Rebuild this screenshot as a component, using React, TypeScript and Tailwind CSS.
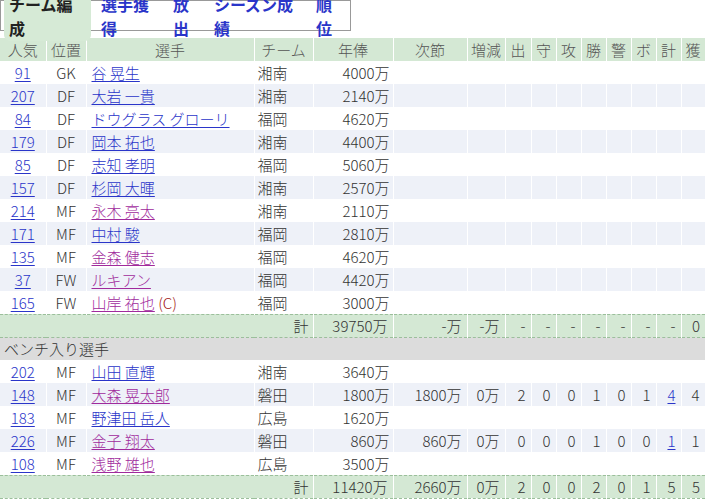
import React from 'react';

const cols = [46, 40, 168, 59, 80, 74, 38, 26, 25, 25, 25, 25, 25, 25, 24];
const heads = ['人気', '位置', '選手', 'チーム', '年俸', '次節', '増減', '出', '守', '攻', '勝', '警', 'ボ', '計', '獲'];

type P = { pop: string; pos: string; name: string; purple?: boolean; cap?: boolean; team: string; pay: string; stats?: string[] };

const starters: P[] = [
  { pop: '91', pos: 'GK', name: '谷 晃生', team: '湘南', pay: '4000万' },
  { pop: '207', pos: 'DF', name: '大岩 一貴', team: '湘南', pay: '2140万' },
  { pop: '84', pos: 'DF', name: 'ドウグラス グローリ', team: '福岡', pay: '4620万' },
  { pop: '179', pos: 'DF', name: '岡本 拓也', team: '湘南', pay: '4400万' },
  { pop: '85', pos: 'DF', name: '志知 孝明', team: '福岡', pay: '5060万' },
  { pop: '157', pos: 'DF', name: '杉岡 大暉', team: '湘南', pay: '2570万' },
  { pop: '214', pos: 'MF', name: '永木 亮太', purple: true, team: '湘南', pay: '2110万' },
  { pop: '171', pos: 'MF', name: '中村 駿', team: '福岡', pay: '2810万' },
  { pop: '135', pos: 'MF', name: '金森 健志', purple: true, team: '福岡', pay: '4620万' },
  { pop: '37', pos: 'FW', name: 'ルキアン', purple: true, team: '福岡', pay: '4420万' },
  { pop: '165', pos: 'FW', name: '山岸 祐也', purple: true, cap: true, team: '福岡', pay: '3000万' },
];

const bench: P[] = [
  { pop: '202', pos: 'MF', name: '山田 直輝', team: '湘南', pay: '3640万' },
  { pop: '148', pos: 'MF', name: '大森 晃太郎', purple: true, team: '磐田', pay: '1800万', stats: ['1800万', '0万', '2', '0', '0', '1', '0', '1', '4', '4'] },
  { pop: '183', pos: 'MF', name: '野津田 岳人', team: '広島', pay: '1620万' },
  { pop: '226', pos: 'MF', name: '金子 翔太', purple: true, team: '磐田', pay: '860万', stats: ['860万', '0万', '0', '0', '0', '1', '0', '0', '1', '1'] },
  { pop: '108', pos: 'MF', name: '浅野 雄也', purple: true, team: '広島', pay: '3500万' },
];

const link = 'text-[#2a35c9] underline underline-offset-2';

function Row({ p, i }: { p: P; i: number }) {
  const bg = i % 2 === 0 ? 'bg-white' : 'bg-[#eef1f8]';
  const s = p.stats ?? Array(10).fill('');
  return (
    <tr className={`${bg} h-[23px]`}>
      <td className="text-center border-r border-white"><span className={link}>{p.pop}</span></td>
      <td className="text-center border-r border-white">{p.pos}</td>
      <td className="pl-[5px] border-r border-white whitespace-nowrap">
        <span className={p.purple ? 'text-[#a02a9c] underline underline-offset-2' : link}>{p.name}</span>
        {p.cap && <span className="text-[#a01010]"> (C)</span>}
      </td>
      <td className="pl-[3px] border-r border-white">{p.team}</td>
      <td className="text-right pr-[3px] border-r border-white">{p.pay}</td>
      {s.map((v, k) => (
        <td key={k} className="text-right pr-[5px] border-r border-white">
          {k === 8 && v ? <span className={link}>{v}</span> : v}
        </td>
      ))}
    </tr>
  );
}

function Total({ vals }: { vals: string[] }) {
  return (
    <tr className="bg-[#d4e8d4] h-[23px] border-y border-dashed border-[#9bbf9b]">
      <td colSpan={4} className="text-right pr-[4px]">計</td>
      {vals.map((v, k) => (
        <td key={k} className="text-right pr-[5px] border-l border-white">{v}</td>
      ))}
    </tr>
  );
}

export default function App() {
  return (
    <div className="w-[705px] h-[501px] bg-white text-[15px] font-light text-[#333] overflow-hidden" style={{ fontFamily: '"Noto Sans CJK JP", "Noto Sans", sans-serif' }}>
      <div className="w-[351px] h-[31px] border border-[#999] flex items-center px-[3px] gap-[10px] text-[16px] font-bold">
        <span className="bg-[#d6ead6] rounded-[6px] px-[5px] py-[1px] text-[#222]">チーム編成</span>
        <span className="text-[#2a35c9]">選手獲得</span>
        <span className="text-[#2a35c9]">放出</span>
        <span className="text-[#2a35c9]">シーズン成績</span>
        <span className="text-[#2a35c9]">順位</span>
      </div>
      <table className="mt-[7px] border-collapse table-fixed w-[705px] leading-none">
        <colgroup>
          {cols.map((w, i) => <col key={i} style={{ width: w }} />)}
        </colgroup>
        <thead>
          <tr className="bg-[#d4e8d4] h-[23px] text-[#555]">
            {heads.map((h, i) => (
              <th key={i} className="font-light text-center border-r border-white">{h}</th>
            ))}
          </tr>
        </thead>
        <tbody>
          {starters.map((p, i) => <Row key={p.pop} p={p} i={i} />)}
          <Total vals={['39750万', '-万', '-万', '-', '-', '-', '-', '-', '-', '-', '0']} />
          <tr className="bg-[#dcdcdc] h-[23px]">
            <td colSpan={15} className="pl-[4px]">ベンチ入り選手</td>
          </tr>
          {bench.map((p, i) => <Row key={p.pop} p={p} i={i} />)}
          <Total vals={['11420万', '2660万', '0万', '2', '0', '0', '2', '0', '1', '5', '5']} />
        </tbody>
      </table>
    </div>
  );
}
